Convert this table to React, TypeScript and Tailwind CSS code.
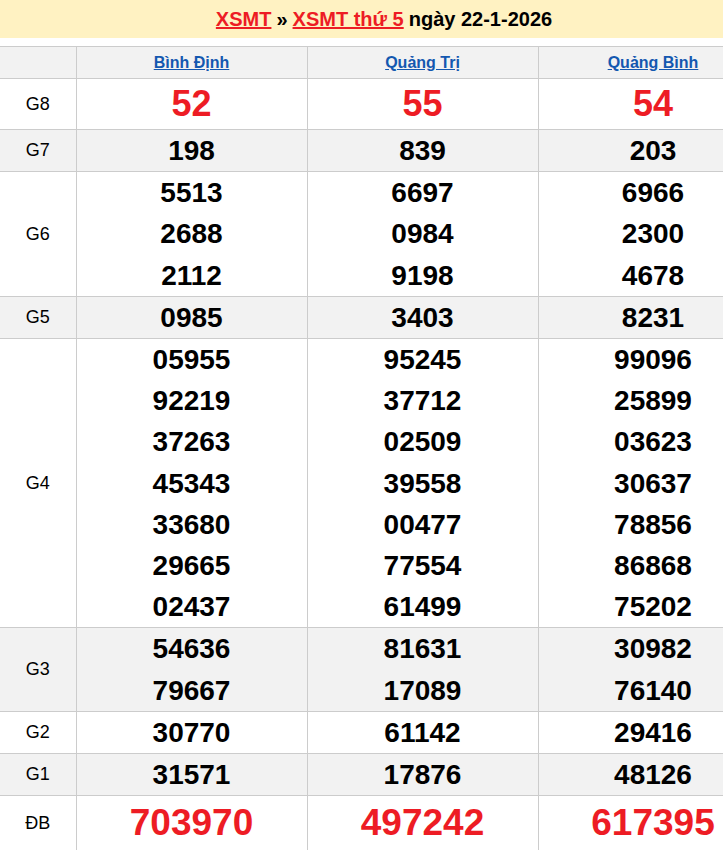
const provinces = ['Bình Định', 'Quảng Trị', 'Quảng Bình']

type Prize = {
  label: string
  values: string[][]
  big?: boolean
  alt?: boolean
}

const prizes: Prize[] = [
  { label: 'G8', values: [['52'], ['55'], ['54']], big: true },
  { label: 'G7', values: [['198'], ['839'], ['203']], alt: true },
  {
    label: 'G6',
    values: [
      ['5513', '2688', '2112'],
      ['6697', '0984', '9198'],
      ['6966', '2300', '4678'],
    ],
  },
  { label: 'G5', values: [['0985'], ['3403'], ['8231']], alt: true },
  {
    label: 'G4',
    values: [
      ['05955', '92219', '37263', '45343', '33680', '29665', '02437'],
      ['95245', '37712', '02509', '39558', '00477', '77554', '61499'],
      ['99096', '25899', '03623', '30637', '78856', '86868', '75202'],
    ],
  },
  {
    label: 'G3',
    values: [
      ['54636', '79667'],
      ['81631', '17089'],
      ['30982', '76140'],
    ],
    alt: true,
  },
  { label: 'G2', values: [['30770'], ['61142'], ['29416']] },
  { label: 'G1', values: [['31571'], ['17876'], ['48126']], alt: true },
  { label: 'ĐB', values: [['703970'], ['497242'], ['617395']], big: true },
]

export default function App() {
  return (
    <div className="w-[768px] bg-white font-['Liberation_Sans',Arial,sans-serif] text-black">
      {/* Title bar */}
      <div className="flex h-[38px] items-center justify-center bg-[#fff2c2] text-[20px] font-bold">
        <a href="#" className="text-[#ed1c24] underline">XSMT</a>
        <span className="mx-[5px]">»</span>
        <a href="#" className="text-[#ed1c24] underline">XSMT thứ 5</a>
        <span className="ml-[5px]">ngày 22-1-2026</span>
      </div>

      <table className="mt-2 w-[768px] table-fixed border-collapse">
        <colgroup>
          <col className="w-[76px]" />
          <col className="w-[231px]" />
          <col className="w-[231px]" />
          <col className="w-[230px]" />
        </colgroup>
        <thead>
          <tr className="h-[32px] bg-[#f2f2f2]">
            <th className="border-y border-r border-[#cccccc]" />
            {provinces.map((p) => (
              <th key={p} className="border border-[#cccccc] p-0 text-center text-[16px] font-bold">
                <a href="#" className="text-[#1458b0] underline">{p}</a>
              </th>
            ))}
          </tr>
        </thead>
        <tbody>
          {prizes.map((row) => (
            <tr key={row.label} className={row.alt ? 'bg-[#f2f2f2]' : 'bg-white'}>
              <td className="border-y border-r border-[#cccccc] p-0 text-center align-middle text-[18px]">
                {row.label}
              </td>
              {row.values.map((col, i) => (
                <td key={i} className="border border-[#cccccc] p-0 text-center align-middle font-bold">
                  {col.map((v) =>
                    row.big ? (
                      <div
                        key={v}
                        className={
                          row.label === 'G8'
                            ? 'text-[36px] leading-[50px] text-[#ed1c24]'
                            : 'text-[37px] leading-[54px] text-[#ed1c24]'
                        }
                      >
                        {v}
                      </div>
                    ) : (
                      <div key={v} className="text-[28px] leading-[41.2px]">
                        {v}
                      </div>
                    ),
                  )}
                </td>
              ))}
            </tr>
          ))}
        </tbody>
      </table>
    </div>
  )
}
